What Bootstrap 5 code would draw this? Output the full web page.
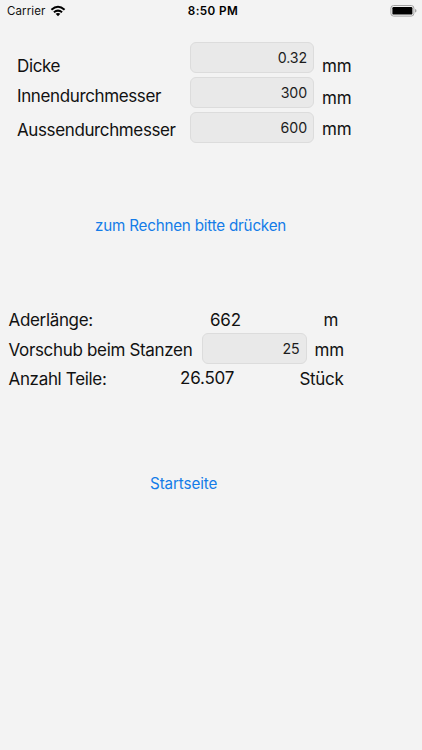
<!DOCTYPE html>
<html lang="de">
<head>
<meta charset="utf-8">
<meta name="viewport" content="width=device-width, initial-scale=1">
<title>Rechner</title>
<link href="https://cdn.jsdelivr.net/npm/bootstrap@5.3.0/dist/css/bootstrap.min.css" rel="stylesheet">
<style>
body{background:#f3f3f3;color:#111;font-family:Inter,sans-serif;font-size:17px;line-height:22px;letter-spacing:-.2px;height:750px;overflow:hidden}
.status{height:22px;font-size:11.5px;letter-spacing:.1px;padding:0 5px 0 7px;display:grid;grid-template-columns:1fr auto 1fr;margin-bottom:20px}
.signal{gap:5px}
.clock{font-size:11.7px;letter-spacing:.42px;padding-left:2px}
label{letter-spacing:-.38px}
.label-tight{letter-spacing:-.33px}
.measures{display:grid;grid-template-columns:172.5px 124.5px auto;padding-left:17px;height:102px}
.units{padding-left:8px}
.field{height:31px;border:1px solid #dcdcdc;border-radius:6px;background:#e9e9e9;color:#1c1c1c;font-size:14.2px;letter-spacing:-.1px;padding:0 6px 1px;text-align:right;box-shadow:none}
.field:focus{background:#e9e9e9;box-shadow:none}
.fields{gap:4px}
.action{color:#147ce8;font-size:15.2px;line-height:22px;letter-spacing:-.2px;border:0;padding:0}
.calc{margin:71px 0 72px 95px}
.results{padding-left:8.5px}
.line{height:31px;margin-top:2px}
.line-outer{height:22px}
.c-name{width:201.5px}
.c-total{width:113.5px}
.c-feed{width:193px;padding-top:2px}
.c-feedbox{width:105px}
.c-parts{width:171.5px;padding-top:1px}
.c-count{width:119.5px}
.c-pieces{padding-top:1px;letter-spacing:-.3px}
.last{margin-top:3px}
.home{margin:84px 0 0 150px;letter-spacing:-.1px}
.drop-13{margin-top:13px}.drop-12{margin-top:12px}.drop-10{margin-top:10px}.drop-8{margin-top:8px}.drop-9{margin-top:9px}
.u-in{padding:2px 0 0 8px}
</style>
<script src="https://cdn.jsdelivr.net/npm/bootstrap@5.3.0/dist/js/bootstrap.bundle.min.js"></script>
</head>
<body>
<header class="status align-items-center">
  <div class="signal d-flex align-items-center"><span>Carrier</span>
    <svg width="16" height="12" viewBox="0 0 16 12" aria-hidden="true"><g fill="none" stroke="#000" stroke-width="2"><path d="M1.4 4.7Q8-1.1 14.6 4.7"/><path d="M3.9 7.3Q8 3.9 12.1 7.3"/></g><path d="M5.6 8.8Q8 7 10.4 8.8L8 11.3Z"/></svg>
  </div>
  <div class="clock fw-semibold text-black">8:50 PM</div>
  <svg class="ms-auto" width="27" height="12" viewBox="0 0 27 12" aria-hidden="true"><rect x=".9" y=".5" width="23" height="10.6" rx="2.7" fill="none" stroke="#a3a3a3"/><rect x="2.4" y="2" width="20" height="7.6" rx="1.2"/><path d="M25 4q1.5.2 1.5 1.8T25 7.6Z" fill="#a3a3a3"/></svg>
</header>
<main>
  <section class="measures">
    <div class="d-flex flex-column align-items-start">
      <label class="drop-13" for="dicke">Dicke</label>
      <label class="drop-8" for="innen">Innendurchmesser</label>
      <label class="drop-12" for="aussen">Aussendurchmesser</label>
    </div>
    <div class="fields d-flex flex-column">
      <input class="field form-control" id="dicke" value="0.32">
      <input class="field form-control" id="innen" value="300">
      <input class="field form-control" id="aussen" value="600">
    </div>
    <div class="units d-flex flex-column align-items-start">
      <span class="drop-13">mm</span>
      <span class="drop-10">mm</span>
      <span class="drop-9">mm</span>
    </div>
  </section>
  <button class="action calc btn d-block" type="button">zum Rechnen bitte drücken</button>
  <section class="results">
    <div class="line-outer d-flex align-items-center"><span class="c-name label-tight">Aderlänge:</span><span class="c-total">662</span><span>m</span></div>
    <div class="line d-flex align-items-center"><label class="c-feed label-tight" for="vorschub">Vorschub beim Stanzen</label><input class="field form-control c-feedbox" id="vorschub" value="25"><span class="u-in">mm</span></div>
    <div class="line-outer last d-flex align-items-center"><span class="c-parts label-tight">Anzahl Teile:</span><span class="c-count">26.507</span><span class="c-pieces">Stück</span></div>
  </section>
  <button class="action home btn d-block" type="button">Startseite</button>
</main>
</body>
</html>
